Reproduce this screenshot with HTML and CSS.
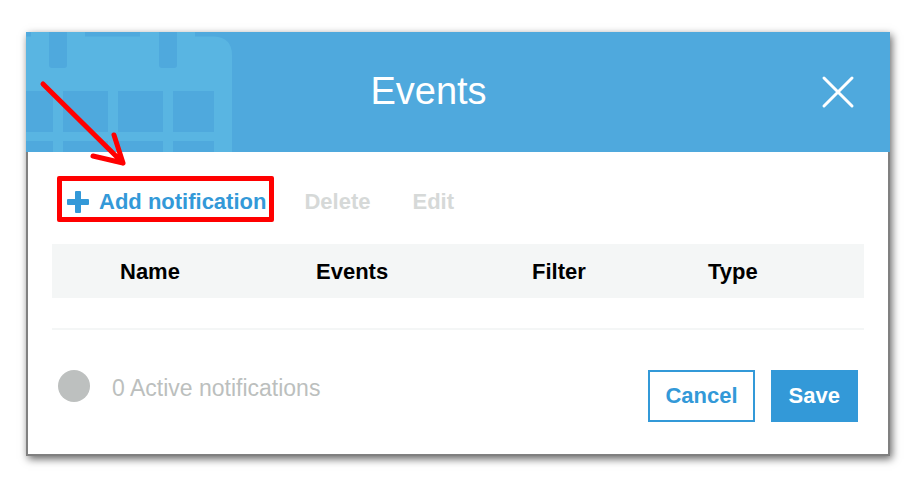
FILE: index.html
```html
<!DOCTYPE html>
<html lang="en">
	<head>
		<meta charset="utf-8">
		<title>Events</title>
		<link rel="stylesheet" href="styles.css">
	</head>
	<body>
		<div class="dialog" role="dialog" aria-labelledby="title">
			<div class="header">
				<svg class="calendar" width="206" height="120" viewBox="0 0 206 120" aria-hidden="true">
					<path class="light" d="M0 4.5H5V0H59V4.5H114V0H169V4.5H188Q206 5.5 206 23V120H0Z"/>
					<path class="dark" d="M23 0H41V33Q41 36 38 36H26Q23 36 23 33ZM133 0H151V33Q151 36 148 36H136Q133 36 133 33Z"/>
					<path class="dark" d="M0 59H27V100H0ZM37 59H82V100H37ZM92 59H137V100H92ZM147 59H188V100H147ZM0 109H27V120H0ZM37 109H82V120H37ZM92 109H137V120H92ZM147 109H188V120H147Z"/>
				</svg>
				<h1 class="title" id="title">Events</h1>
				<button class="close" type="button" aria-label="Close">
					<svg width="34" height="34" viewBox="0 0 34 34"><path d="M3 3L31 31M31 3L3 31"/></svg>
				</button>
			</div>

			<div class="content">
				<div class="toolbar">
					<button class="tool add" type="button">
						<svg width="22" height="22" viewBox="0 0 22 22" aria-hidden="true"><path d="M9 0H13Q14 0 14 1V8H21Q22 8 22 9V13Q22 14 21 14H14V21Q14 22 13 22H9Q8 22 8 21V14H1Q0 14 0 13V9Q0 8 1 8H8V1Q8 0 9 0Z"/></svg>
						Add notification
					</button>
					<button class="tool" type="button" disabled>Delete</button>
					<button class="tool" type="button" disabled>Edit</button>
				</div>

				<table class="list">
					<thead>
						<tr>
							<th class="name">Name</th>
							<th class="events">Events</th>
							<th class="filter">Filter</th>
							<th>Type</th>
						</tr>
					</thead>
				</table>

				<div class="footer">
					<div class="status"><span class="dot"></span><span class="count">0 Active notifications</span></div>
					<div class="buttons">
						<button class="btn" type="button">Cancel</button>
						<button class="btn save" type="button">Save</button>
					</div>
				</div>
			</div>

			<svg class="arrow" width="90" height="90" viewBox="0 0 90 90" aria-hidden="true">
				<path d="M5 5L85 84M76 56L85 84L55 77"/>
			</svg>
		</div>
	</body>
</html>
```

FILE: styles.css
```css
* {
	box-sizing: border-box;
}

body {
	margin: 0;
	padding: 32px 30px 34px 26px;
	background: white;
	font-family: "Liberation Sans", Arial, sans-serif;
	font-size: 22px;
	line-height: 26px;
}

button {
	font: inherit;
	font-weight: bold;
	margin: 0;
	padding: 0;
	border: 0;
	background: none;
	cursor: pointer;
}

.dialog {
	position: relative;
	background: white;
	box-shadow: 2px 3px 8px rgba(0, 0, 0, 0.6);
}

.header {
	position: relative;
	display: flex;
	align-items: center;
	height: 120px;
	padding: 0 35px 0 10px;
	background: #4fa9dd;
}

.calendar {
	position: absolute;
	top: 0;
	left: 0;
}

.light {
	fill: #59b5e2;
}

.dark {
	fill: #4fa9dd;
}

.title {
	flex: 1;
	margin: 0;
	padding-bottom: 2px;
	text-align: center;
	font-size: 38px;
	line-height: 44px;
	font-weight: normal;
	color: white;
}

.close svg {
	display: block;
	fill: none;
	stroke: white;
	stroke-width: 3;
	stroke-linecap: round;
}

.content {
	padding: 24px 24px 32px;
	border: 2px solid #808080;
	border-top: 0;
}

.toolbar {
	display: flex;
	align-items: center;
	gap: 42px;
	padding-left: 5px;
	margin-bottom: 22px;
}

.tool {
	padding-top: 6px;
	color: #3399d8;
}

.tool:disabled {
	color: #d6d9d8;
	cursor: default;
}

.add {
	display: flex;
	align-items: center;
	gap: 10px;
	height: 46px;
	padding: 5px 3px 0 5px;
	margin-right: -12px;
	border: 5px solid red;
	border-radius: 2px;
}

.add svg {
	fill: #3399d8;
}

.list {
	width: 100%;
	table-layout: fixed;
	border-collapse: collapse;
}

.list th {
	height: 54px;
	padding: 2px 0 0 68px;
	text-align: left;
	color: black;
	background: #f4f6f6;
}

.name {
	width: 196px;
}

.events {
	width: 216px;
}

.filter {
	width: 176px;
}

.footer {
	display: flex;
	justify-content: space-between;
	align-items: flex-start;
	margin-top: 30px;
	padding: 40px 6px 0;
	border-top: 2px solid #f4f6f6;
}

.status {
	display: flex;
	align-items: flex-start;
	gap: 22px;
	font-size: 23px;
	line-height: 32px;
	color: #bcbfbe;
}

.count {
	padding-top: 2px;
}

.dot {
	width: 32px;
	height: 32px;
	border-radius: 50%;
	background: #bdc0bf;
}

.buttons {
	display: flex;
	gap: 16px;
}

.btn {
	height: 52px;
	padding: 0 15px;
	border: 2px solid #3399d8;
	color: #3399d8;
	background: white;
}

.save {
	padding: 0 16px;
	color: white;
	background: #3399d8;
}

.arrow {
	position: absolute;
	top: 47px;
	left: 12px;
	fill: none;
	stroke: red;
	stroke-width: 5;
	stroke-linecap: round;
	stroke-linejoin: round;
	pointer-events: none;
}
```
